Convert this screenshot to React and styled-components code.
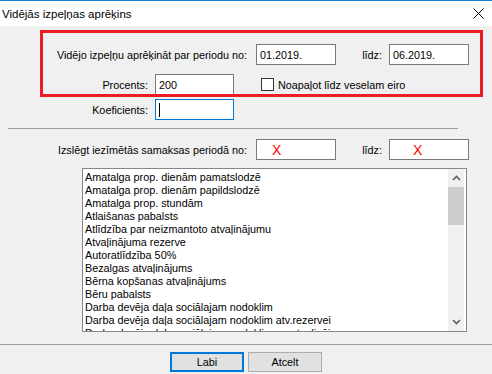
import React from 'react';
import styled, { createGlobalStyle } from 'styled-components';

const GlobalStyle = createGlobalStyle`
    html, body {
        margin: 0;
        padding: 0;
        background: #f0f0f0;
    }
    body {
        font-family: "Liberation Sans", Arial, sans-serif;
        font-size: 10.8px;
        color: #000;
    }
`

const Window = styled.div`
    position: relative;
    width: 492px;
    height: 374px;
    overflow: hidden;
    background: #f0f0f0;
    display: flex;
    flex-direction: column;
`
const TitleBar = styled.div`
    height: 25px;
    border-top: 1px solid #1b7bd0;
    background: #fff;
    display: flex;
    align-items: center;
    padding-left: 2px;
`
const Title = styled.span`
    font-size: 11.5px;
    flex: 1;
`
const CloseBtn = styled.div`
    width: 28px;
    height: 25px;
    display: flex;
    align-items: center;
    justify-content: center;
`
const Body = styled.div`
    display: flex;
    flex-direction: column;
    padding-top: 18px;
`
const Row = styled.div`
    display: flex;
    align-items: center;
    height: 21px;
    margin-top: ${p => p.top || 0}px;
`
const Label = styled.span`
    flex: none;
    width: ${p => p.width}px;
    margin-right: ${p => p.gap || 0}px;
    text-align: right;
    white-space: nowrap;
`
const Field = styled.div`
    flex: none;
    box-sizing: border-box;
    width: ${p => p.width}px;
    height: 21px;
    background: #fff;
    border: 1px solid ${p => p.focused ? '#0078d7' : '#7a7a7a'};
    display: flex;
    align-items: center;
    padding-left: ${p => p.pad || 3}px;
    white-space: nowrap;
`
const Caret = styled.span`
    display: inline-block;
    width: 1px;
    height: 14px;
    background: #000;
`
const Mark = styled.span`
    color: #ff0000;
    font-size: 14px;
    line-height: 1;
`
const Check = styled.span`
    flex: none;
    box-sizing: border-box;
    width: 13px;
    height: 13px;
    margin-left: 27px;
    margin-right: 4px;
    background: #fff;
    border: 1px solid #333;
`
const Separator = styled.div`
    height: 1px;
    background: #a0a0a0;
    margin: ${p => p.top}px 0 0 ${p => p.left || 0}px;
    width: ${p => p.width ? p.width + 'px' : 'auto'};
`
const ListBox = styled.div`
    box-sizing: border-box;
    margin: 8px 0 0 82px;
    width: 385px;
    height: 164px;
    border: 1px solid #828790;
    background: #fff;
    display: flex;
`
const Items = styled.div`
    flex: 1;
    overflow: hidden;
    padding: 2px 0 0 2px;
`
const Item = styled.div`
    height: 13px;
    line-height: 13px;
    white-space: nowrap;
`
const ScrollBar = styled.div`
    flex: none;
    width: 16px;
    margin: 0 2px 0 0;
    background: #f0f0f0;
    display: flex;
    flex-direction: column;
`
const ScrollBtn = styled.div`
    height: 18px;
    display: flex;
    align-items: center;
    justify-content: center;
`
const Thumb = styled.div`
    height: 38px;
    background: #cdcdcd;
`
const Track = styled.div`
    flex: 1;
`
const Buttons = styled.div`
    display: flex;
    justify-content: center;
    gap: 4px;
    margin-top: 7px;
`
const Button = styled.div`
    box-sizing: border-box;
    width: 74px;
    height: 20px;
    background: #e1e1e1;
    border: ${p => p.primary ? '2px solid #0078d7' : '1px solid #adadad'};
    display: flex;
    align-items: center;
    justify-content: center;
`
const Highlight = styled.div`
    position: absolute;
    left: 40px;
    top: 30px;
    width: 443px;
    height: 67px;
    box-sizing: border-box;
    border: 3px solid #ed1c24;
    pointer-events: none;
`

const items = [
    'Amatalga prop. dienām pamatslodzē',
    'Amatalga prop. dienām papildslodzē',
    'Amatalga prop. stundām',
    'Atlaišanas pabalsts',
    'Atlīdzība par neizmantoto atvaļinājumu',
    'Atvaļinājuma rezerve',
    'Autoratlīdzība 50%',
    'Bezalgas atvaļinājums',
    'Bērna kopšanas atvaļinājums',
    'Bēru pabalsts',
    'Darba devēja daļa sociālajam nodoklim',
    'Darba devēja daļa sociālajam nodoklim atv.rezervei',
    'Darba devēja daļa sociālajam nodoklim no atvaļinājuma',
];

function Chevron({ down }) {
    return (
        <svg width="9" height="6" viewBox="0 0 9 6">
            <path d={down ? 'M1 1 L4.5 4.5 L8 1' : 'M1 5 L4.5 1.5 L8 5'} stroke="#606060" strokeWidth="1.6" fill="none" />
        </svg>
    )
}

export default function App() {
    return (
        <>
            <GlobalStyle />
            <Window>
                <TitleBar>
                    <Title>Vidējās izpeļņas aprēķins</Title>
                    <CloseBtn>
                        <svg width="11" height="11" viewBox="0 0 11 11">
                            <path d="M0.5 0.5 L10.5 10.5 M10.5 0.5 L0.5 10.5" stroke="#000" strokeWidth="1" />
                        </svg>
                    </CloseBtn>
                </TitleBar>
                <Body>
                    <Row>
                        <Label width={247} gap={9}>Vidējo izpeļņu aprēķināt par periodu no:</Label>
                        <Field width={80}>01.2019.</Field>
                        <Label width={46} gap={7}>līdz:</Label>
                        <Field width={80}>06.2019.</Field>
                    </Row>
                    <Row top={9}>
                        <Label width={148} gap={7}>Procents:</Label>
                        <Field width={79}>200</Field>
                        <Check />
                        <span>Noapaļot līdz veselam eiro</span>
                    </Row>
                    <Row top={4}>
                        <Label width={148} gap={7}>Koeficients:</Label>
                        <Field width={79} focused><Caret /></Field>
                    </Row>
                    <Separator top={8} left={8} width={450} />
                    <Row top={10}>
                        <Label width={247} gap={9}>Izslēgt iezīmētās samaksas periodā no:</Label>
                        <Field width={80} pad={15}><Mark>X</Mark></Field>
                        <Label width={46} gap={7}>līdz:</Label>
                        <Field width={80} pad={23}><Mark>X</Mark></Field>
                    </Row>
                    <ListBox>
                        <Items>
                            {items.map((item, i) => <Item key={i}>{item}</Item>)}
                        </Items>
                        <ScrollBar>
                            <ScrollBtn><Chevron /></ScrollBtn>
                            <Thumb />
                            <Track />
                            <ScrollBtn><Chevron down /></ScrollBtn>
                        </ScrollBar>
                    </ListBox>
                    <Separator top={12} />
                    <Buttons>
                        <Button primary>Labi</Button>
                        <Button>Atcelt</Button>
                    </Buttons>
                </Body>
                <Highlight />
            </Window>
        </>
    )
}
